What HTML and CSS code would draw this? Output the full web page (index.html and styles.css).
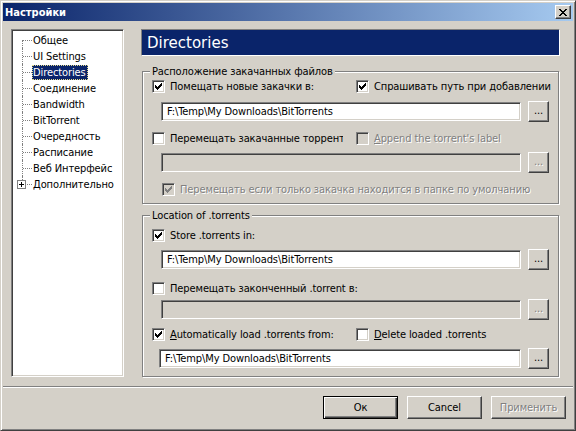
FILE: index.html
```html
<!DOCTYPE html>
<html>
<head>
<meta charset="utf-8">
<link rel="stylesheet" href="styles.css">
</head>
<body>
<div class="window">
  <div class="titlebar">
    <span class="title">Настройки</span>
    <span class="close"><svg width="8" height="7" viewBox="0 0 8 7" shape-rendering="crispEdges"><path d="M0 0h2v1H0z M6 0h2v1H6z M1 1h2v1H1z M5 1h2v1H5z M2 2h4v1H2z M3 3h2v1H3z M2 4h4v1H2z M1 5h2v1H1z M5 5h2v1H5z M0 6h2v1H0z M6 6h2v1H6z" fill="#000"/></svg></span>
  </div>
  <div class="main">
    <div class="tree">
      <ul>
        <li class="first"><span class="branch"></span><span class="label">Общее</span></li>
        <li><span class="branch"></span><span class="label">UI Settings</span></li>
        <li class="sel"><span class="branch"></span><span class="label">Directories</span></li>
        <li><span class="branch"></span><span class="label">Соединение</span></li>
        <li><span class="branch"></span><span class="label">Bandwidth</span></li>
        <li><span class="branch"></span><span class="label">BitTorrent</span></li>
        <li><span class="branch"></span><span class="label">Очередность</span></li>
        <li><span class="branch"></span><span class="label">Расписание</span></li>
        <li><span class="branch"></span><span class="label">Веб Интерфейс</span></li>
        <li class="last"><span class="branch"><span class="plus"></span></span><span class="label">Дополнительно</span></li>
      </ul>
    </div>
    <div class="panel">
      <div class="header">Directories</div>
      <div class="group g1">
        <div class="legend">Расположение закачанных файлов</div>
        <div class="row">
          <div class="col1"><span class="cb on"><svg width="7" height="7" viewBox="0 0 7 7" shape-rendering="crispEdges"><path d="M0 2h1v3H0z M1 3h1v3H1z M2 4h1v3H2z M3 3h1v3H3z M4 2h1v3H4z M5 1h1v3H5z M6 0h1v3H6z"/></svg></span><span class="lbl">Помещать новые закачки в:</span></div>
          <div class="col2"><span class="cb on"><svg width="7" height="7" viewBox="0 0 7 7" shape-rendering="crispEdges"><path d="M0 2h1v3H0z M1 3h1v3H1z M2 4h1v3H2z M3 3h1v3H3z M4 2h1v3H4z M5 1h1v3H5z M6 0h1v3H6z"/></svg></span><span class="lbl">Спрашивать путь при добавлении</span></div>
        </div>
        <div class="field mt8">
          <div class="input">F:\Temp\My Downloads\BitTorrents</div>
          <div class="browse">...</div>
        </div>
        <div class="row mt10">
          <div class="col1"><span class="cb"></span><span class="lbl">Перемещать закачанные торренты в:</span></div>
          <div class="col2 disabled"><span class="cb dis"></span><span class="lbl"><u>A</u>ppend the torrent's label</span></div>
        </div>
        <div class="field mt7">
          <div class="input dis"></div>
          <div class="browse disabled">...</div>
        </div>
        <div class="row mt10 indent disabled">
          <span class="cb dis on"><svg width="7" height="7" viewBox="0 0 7 7" shape-rendering="crispEdges"><path d="M0 2h1v3H0z M1 3h1v3H1z M2 4h1v3H2z M3 3h1v3H3z M4 2h1v3H4z M5 1h1v3H5z M6 0h1v3H6z"/></svg></span><span class="lbl">Перемещать если только закачка находится в папке по умолчанию</span>
        </div>
      </div>
      <div class="group g2">
        <div class="legend">Location of .torrents</div>
        <div class="row">
          <span class="cb on"><svg width="7" height="7" viewBox="0 0 7 7" shape-rendering="crispEdges"><path d="M0 2h1v3H0z M1 3h1v3H1z M2 4h1v3H2z M3 3h1v3H3z M4 2h1v3H4z M5 1h1v3H5z M6 0h1v3H6z"/></svg></span><span class="lbl">Store .torrents in:</span>
        </div>
        <div class="field mt7">
          <div class="input">F:\Temp\My Downloads\BitTorrents</div>
          <div class="browse">...</div>
        </div>
        <div class="row mt12">
          <span class="cb"></span><span class="lbl">Перемещать законченный .torrent в:</span>
        </div>
        <div class="field mt4">
          <div class="input dis"></div>
          <div class="browse disabled">...</div>
        </div>
        <div class="row mt8">
          <div class="col1"><span class="cb on"><svg width="7" height="7" viewBox="0 0 7 7" shape-rendering="crispEdges"><path d="M0 2h1v3H0z M1 3h1v3H1z M2 4h1v3H2z M3 3h1v3H3z M4 2h1v3H4z M5 1h1v3H5z M6 0h1v3H6z"/></svg></span><span class="lbl"><u>A</u>utomatically load .torrents from:</span></div>
          <div class="col2"><span class="cb"></span><span class="lbl"><u>D</u>elete loaded .torrents</span></div>
        </div>
        <div class="field mt7 shift">
          <div class="input">F:\Temp\My Downloads\BitTorrents</div>
          <div class="browse">...</div>
        </div>
      </div>
    </div>
  </div>
  <div class="sep"></div>
  <div class="buttons">
    <div class="btn default">Ок</div>
    <div class="btn">Cancel</div>
    <div class="btn disabled">Применить</div>
  </div>
</div>
</body>
</html>
```
FILE: styles.css
```css
* { box-sizing: border-box; }
html, body { margin: 0; padding: 0; }
body {
  width: 576px; height: 431px; overflow: hidden;
  background: #d4d0c8;
  font-family: "DejaVu Sans Condensed", "Liberation Sans", sans-serif;
  font-size: 11px; letter-spacing: -0.1px; color: #000;
}
.window {
  width: 576px; height: 431px;
  border: 1px solid; border-color: #d4d0c8 #404040 #404040 #d4d0c8;
  box-shadow: inset 1px 1px 0 #fff, inset -1px -1px 0 #808080;
  padding: 2px; background: #d4d0c8;
}
.titlebar {
  height: 18px;
  background: linear-gradient(to right, #0a246a, #a6caf0);
  display: flex; align-items: center; justify-content: space-between;
  padding: 0 2px;
}
.title { color: #fff; font-weight: bold; font-size: 11px; letter-spacing: 0; }
.close {
  width: 16px; height: 14px; background: #d4d0c8;
  border: 1px solid; border-color: #fff #404040 #404040 #fff;
  box-shadow: inset -1px -1px 0 #808080;
  display: flex; align-items: center; justify-content: center;
  padding-right: 1px;
}
.close svg { display: block; }
.main { display: flex; margin-top: 8px; padding-left: 8px; }
.tree {
  width: 113px; height: 348px; background: #fff; flex: none;
  border: 1px solid; border-color: #808080 #fff #fff #808080;
  box-shadow: inset 1px 1px 0 #404040, inset -1px -1px 0 #d4d0c8;
  padding: 2px 0 0 10px;
}
.tree ul { list-style: none; margin: 0; padding: 0; }
.tree li { display: flex; align-items: center; height: 16px; }
.branch { position: relative; width: 10px; height: 16px; flex: none; }
.branch::before {
  content: ""; position: absolute; left: 0; top: 0; height: 16px;
  border-left: 1px dotted #808080;
}
.first .branch::before { top: 8px; height: 8px; }
.last .branch::before { height: 4px; }
.branch::after {
  content: ""; position: absolute; left: 1px; top: 8px; width: 9px;
  border-top: 1px dotted #808080;
}
.last .branch::after { left: 5px; width: 5px; }
.plus {
  position: absolute; left: -5px; top: 4px; width: 9px; height: 9px;
  border: 1px solid #808080; background: #fff; z-index: 1;
}
.plus::before { content: ""; position: absolute; left: 1px; top: 3px; width: 5px; height: 1px; background: #000; }
.plus::after { content: ""; position: absolute; left: 3px; top: 1px; width: 1px; height: 5px; background: #000; }
.label {
  border: 1px solid transparent; padding: 0 1px 0 0;
  line-height: 13px; white-space: nowrap;
}
.sel .label { background: #0a246a; color: #fff; border: 1px dotted #e6dc8c; }
.panel { margin-left: 17px; width: 419px; flex: none; }
.header {
  height: 27px; background: #0a246a; color: #fff;
  font-family: "DejaVu Sans", sans-serif; font-size: 15px; letter-spacing: 0;
  border: 1px solid; border-color: #808080 #fff #fff #808080;
  padding-left: 5px; display: flex; align-items: center;
}
.group {
  position: relative; margin-left: 1px; width: 417px;
  border: 1px solid #808080;
  box-shadow: 1px 1px 0 #fff, inset 1px 1px 0 #fff;
  padding-left: 9px;
}
.g1 { margin-top: 15px; height: 133px; padding-top: 8px; }
.g2 { margin-top: 11px; height: 162px; padding-top: 13px; }
.legend {
  position: absolute; top: -7px; left: 7px; padding: 0 2px;
  background: #d4d0c8; line-height: 13px; white-space: nowrap;
}
.row { display: flex; align-items: center; height: 13px; }
.col1 { display: flex; align-items: center; width: 191px; overflow: hidden; margin-right: 13px; flex: none; }
.col2 { display: flex; align-items: center; flex: none; }
.indent { padding-left: 10px; }
.mt4 { margin-top: 4px; }
.mt7 { margin-top: 7px; }
.mt8 { margin-top: 8px; }
.mt10 { margin-top: 10px; }
.mt12 { margin-top: 12px; }
.cb {
  width: 13px; height: 13px; flex: none; background: #fff;
  border: 1px solid; border-color: #808080 #fff #fff #808080;
  box-shadow: inset 1px 1px 0 #404040, inset -1px -1px 0 #d4d0c8;
  padding: 2px 0 0 2px;
}
.cb svg { display: block; fill: #000; }
.cb.dis { background: #d4d0c8; }
.cb.dis svg { fill: #808080; }
.lbl { margin-left: 5px; white-space: nowrap; line-height: 13px; }
.disabled { color: #808080; text-shadow: 1px 1px 0 #fff; }
.field { display: flex; margin-left: 9px; height: 21px; }
.field.shift { margin-left: 7px; }
.input {
  width: 360px; height: 19px; margin-top: 1px; background: #fff;
  border: 1px solid; border-color: #808080 #fff #fff #808080;
  box-shadow: inset 1px 1px 0 #404040, inset -1px -1px 0 #d4d0c8;
  padding-left: 5px; line-height: 17px; white-space: nowrap;
}
.shift .input { width: 362px; }
.input.dis { background: #d4d0c8; }
.browse {
  width: 21px; height: 21px; margin-left: 7px; flex: none;
  border: 1px solid; border-color: #fff #404040 #404040 #fff;
  box-shadow: inset -1px -1px 0 #808080;
  text-align: center; line-height: 17px;
}
.sep { margin-top: 9px; height: 2px; border-top: 1px solid #808080; border-bottom: 1px solid #fff; }
.buttons { display: flex; justify-content: flex-end; gap: 9px; margin-top: 8px; padding-right: 7px; }
.btn {
  width: 75px; height: 23px;
  border: 1px solid; border-color: #fff #404040 #404040 #fff;
  box-shadow: inset -1px -1px 0 #808080;
  display: flex; align-items: center; justify-content: center;
}
.btn.default {
  border: 1px solid #000;
  box-shadow: inset 1px 1px 0 #fff, inset -1px -1px 0 #404040, inset -2px -2px 0 #808080;
}
```
